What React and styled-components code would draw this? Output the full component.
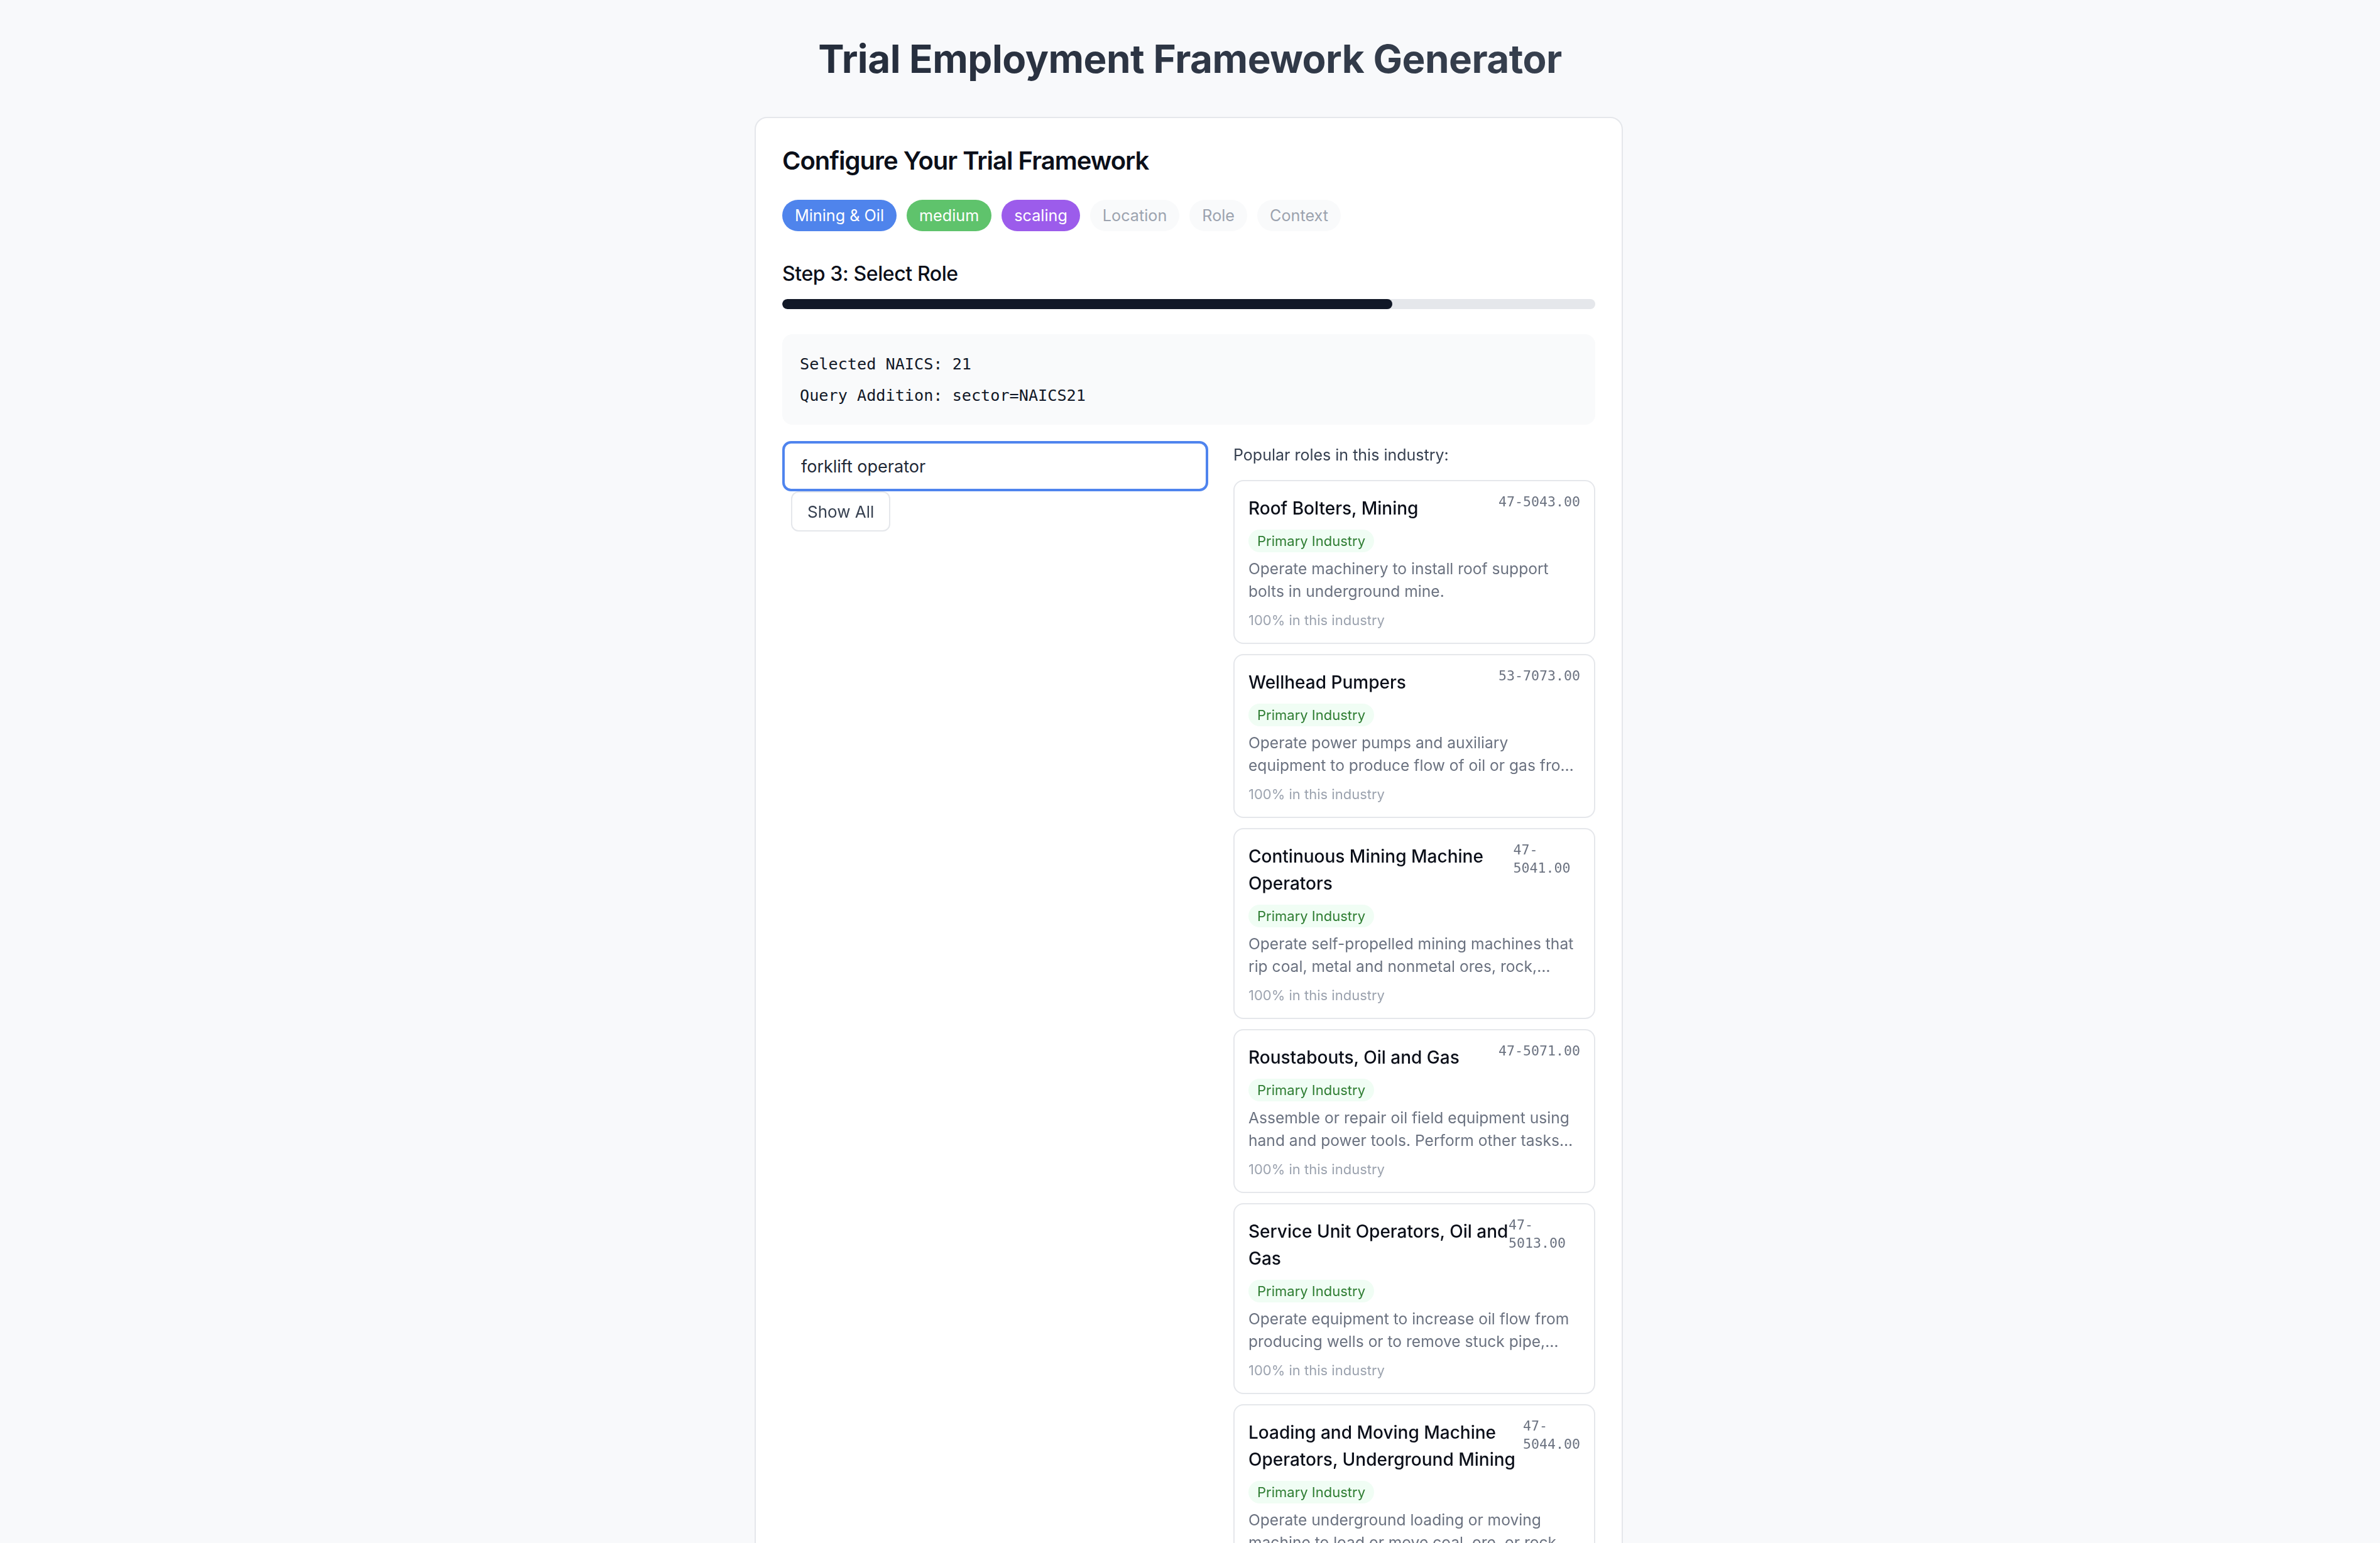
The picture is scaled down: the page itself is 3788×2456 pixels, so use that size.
import React, { useEffect, useRef } from 'react'
import styled, { createGlobalStyle } from 'styled-components'

const GlobalStyle = createGlobalStyle`
    html {
        zoom: 2;
    }
    body {
        margin: 0;
        background: #f8f9fb;
        font-family: Inter, "Noto Sans", sans-serif;
        color: #111827;
    }
`

const Page = styled.div`
    padding: 29px 0 40px;
`

const Title = styled.h1`
    margin: 0 0 28px;
    text-align: center;
    font-size: 31px;
    line-height: 36px;
    font-weight: 700;
    letter-spacing: -0.25px;
    background: linear-gradient(to right, #111827, #4b5563);
    -webkit-background-clip: text;
    background-clip: text;
    color: transparent;
`

const Card = styled.div`
    width: 691px;
    box-sizing: border-box;
    margin: 0 auto;
    transform: translateX(-1px);
    background: #fff;
    border: 1px solid #e5e7eb;
    border-radius: 10px;
    padding: 20px 21px;
`

const Heading = styled.h2`
    margin: 0 0 17px;
    font-size: 20px;
    line-height: 28px;
    font-weight: 600;
    letter-spacing: -0.5px;
    color: #0b0f19;
`

const PillRow = styled.div`
    display: flex;
    gap: 8px;
    margin-bottom: 22px;
`

const Pill = styled.span`
    display: inline-flex;
    align-items: center;
    height: 25px;
    padding: 0 10px;
    border-radius: 999px;
    font-size: 12.6px;
    background: ${p => p.$bg || '#f9fafb'};
    color: ${p => p.$color || '#9ca3af'};
`

const StepTitle = styled.h3`
    margin: 0 0 8px;
    font-size: 16px;
    line-height: 24px;
    font-weight: 500;
    letter-spacing: -0.2px;
    color: #0b0f19;
`

const Track = styled.div`
    height: 8px;
    border-radius: 999px;
    background: #e5e7eb;
    overflow: hidden;
    margin-bottom: 20px;
`

const Fill = styled.div`
    height: 100%;
    border-radius: 999px;
    background: #111827;
`

const CodeBox = styled.div`
    background: #f9fafb;
    border-radius: 8px;
    padding: 14px 14px 13px;
    display: flex;
    flex-direction: column;
    gap: 5px;
    margin-bottom: 13px;
`

const CodeLine = styled.div`
    font-family: "DejaVu Sans Mono", "Liberation Mono", monospace;
    font-size: 12.6px;
    line-height: 20px;
    color: #111827;
`

const Columns = styled.div`
    display: flex;
    gap: 20px;
    align-items: flex-start;
`

const LeftCol = styled.div`
    flex: 1;
    min-width: 0;
`

const SearchInput = styled.input`
    display: block;
    width: 100%;
    height: 40px;
    box-sizing: border-box;
    border: 2px solid #4f84ee;
    border-radius: 7px;
    padding: 0 13px;
    font-family: Inter, "Noto Sans", sans-serif;
    font-size: 13.5px;
    color: #1f2937;
    outline: none;
`

const ShowAll = styled.button`
    margin-left: 7px;
    height: 32px;
    padding: 0 12px;
    background: #fff;
    border: 1px solid #e5e7eb;
    border-radius: 6px;
    font-family: Inter, "Noto Sans", sans-serif;
    font-size: 13px;
    color: #374151;
`

const RightCol = styled.div`
    width: 288px;
    flex-shrink: 0;
`

const Label = styled.div`
    margin: 2px 0 11px;
    font-size: 12.5px;
    line-height: 18px;
    color: #374151;
`

const RoleList = styled.div`
    display: flex;
    flex-direction: column;
    gap: 8px;
`

const RoleCard = styled.div`
    background: #fff;
    border: 1px solid #e5e7eb;
    border-radius: 8px;
    padding: 11px 11px 10px;
`

const RoleHead = styled.div`
    display: flex;
    justify-content: space-between;
    align-items: flex-start;
`

const RoleName = styled.div`
    font-size: 14px;
    line-height: 21.5px;
    font-weight: 500;
    color: #0b0f19;
`

const RoleCode = styled.span`
    margin-top: -2px;
    font-family: "DejaVu Sans Mono", "Liberation Mono", monospace;
    font-size: 10.8px;
    line-height: 14.5px;
    color: #6b7280;
`

const Badge = styled.span`
    display: inline-block;
    margin-top: 6px;
    height: 18px;
    line-height: 18px;
    padding: 0 7px;
    border-radius: 999px;
    background: #f0fdf4;
    color: #2e7d32;
    font-size: 11px;
`

const Desc = styled.div`
    margin-top: 4px;
    font-size: 12.3px;
    line-height: 18px;
    color: #6b7280;
    display: -webkit-box;
    -webkit-line-clamp: 2;
    -webkit-box-orient: vertical;
    overflow: hidden;
`

const Pct = styled.div`
    margin-top: 6px;
    font-size: 11px;
    line-height: 16px;
    color: #9ca3af;
`

const pills = [
    { text: 'Mining & Oil', bg: '#4f84ec', color: '#fff' },
    { text: 'medium', bg: '#5fc36c', color: '#fff' },
    { text: 'scaling', bg: '#9c5ceb', color: '#fff' },
    { text: 'Location' },
    { text: 'Role' },
    { text: 'Context' },
]

const roles = [
    { name: 'Roof Bolters, Mining', code: '47-5043.00', desc: 'Operate machinery to install roof support bolts in underground mine.' },
    { name: 'Wellhead Pumpers', code: '53-7073.00', desc: 'Operate power pumps and auxiliary equipment to produce flow of oil or gas from wells in oil field.' },
    { name: 'Continuous Mining Machine Operators', code: '47-5041.00', desc: 'Operate self-propelled mining machines that rip coal, metal and nonmetal ores, rock, stone, or sand from the mine face and load it onto conveyors.' },
    { name: 'Roustabouts, Oil and Gas', code: '47-5071.00', desc: 'Assemble or repair oil field equipment using hand and power tools. Perform other tasks as needed.' },
    { name: 'Service Unit Operators, Oil and Gas', code: '47-5013.00', desc: 'Operate equipment to increase oil flow from producing wells or to remove stuck pipe, casing, tools, or other obstructions from drilling wells.' },
    { name: 'Loading and Moving Machine Operators, Underground Mining', code: '47-5044.00', desc: 'Operate underground loading or moving machine to load or move coal, ore, or rock onto shuttle or mine car or onto conveyors.' },
    { name: 'Rotary Drill Operators, Oil and Gas', code: '47-5012.00', desc: 'Set up or operate a variety of drills to remove underground oil and gas, or remove core samples for testing.' },
]

export default function App() {
    const inputRef = useRef(null)

    // 입력창에 포커스, 커서는 끝으로
    useEffect(() => {
        const el = inputRef.current
        if (el) {
            el.focus()
            el.setSelectionRange(el.value.length, el.value.length)
        }
    }, [])

    return (
        <>
        <GlobalStyle />
        <Page>
            <Title>Trial Employment Framework Generator</Title>
            <Card>
                <Heading>Configure Your Trial Framework</Heading>
                <PillRow>
                    {pills.map(p => (
                        <Pill key={p.text} $bg={p.bg} $color={p.color}>{p.text}</Pill>
                    ))}
                </PillRow>
                <StepTitle>Step 3: Select Role</StepTitle>
                <Track>
                    <Fill style={{ width: '75%' }} />
                </Track>
                <CodeBox>
                    <CodeLine>Selected NAICS: 21</CodeLine>
                    <CodeLine>Query Addition: sector=NAICS21</CodeLine>
                </CodeBox>
                <Columns>
                    <LeftCol>
                        <SearchInput ref={inputRef} defaultValue="forklift operator" />
                        <ShowAll>Show All</ShowAll>
                    </LeftCol>
                    <RightCol>
                        <Label>Popular roles in this industry:</Label>
                        <RoleList>
                            {roles.map(r => (
                                <RoleCard key={r.code}>
                                    <RoleHead>
                                        <RoleName>{r.name}</RoleName>
                                        <RoleCode>{r.code}</RoleCode>
                                    </RoleHead>
                                    <Badge>Primary Industry</Badge>
                                    <Desc>{r.desc}</Desc>
                                    <Pct>100% in this industry</Pct>
                                </RoleCard>
                            ))}
                        </RoleList>
                    </RightCol>
                </Columns>
            </Card>
        </Page>
        </>
    )
}
